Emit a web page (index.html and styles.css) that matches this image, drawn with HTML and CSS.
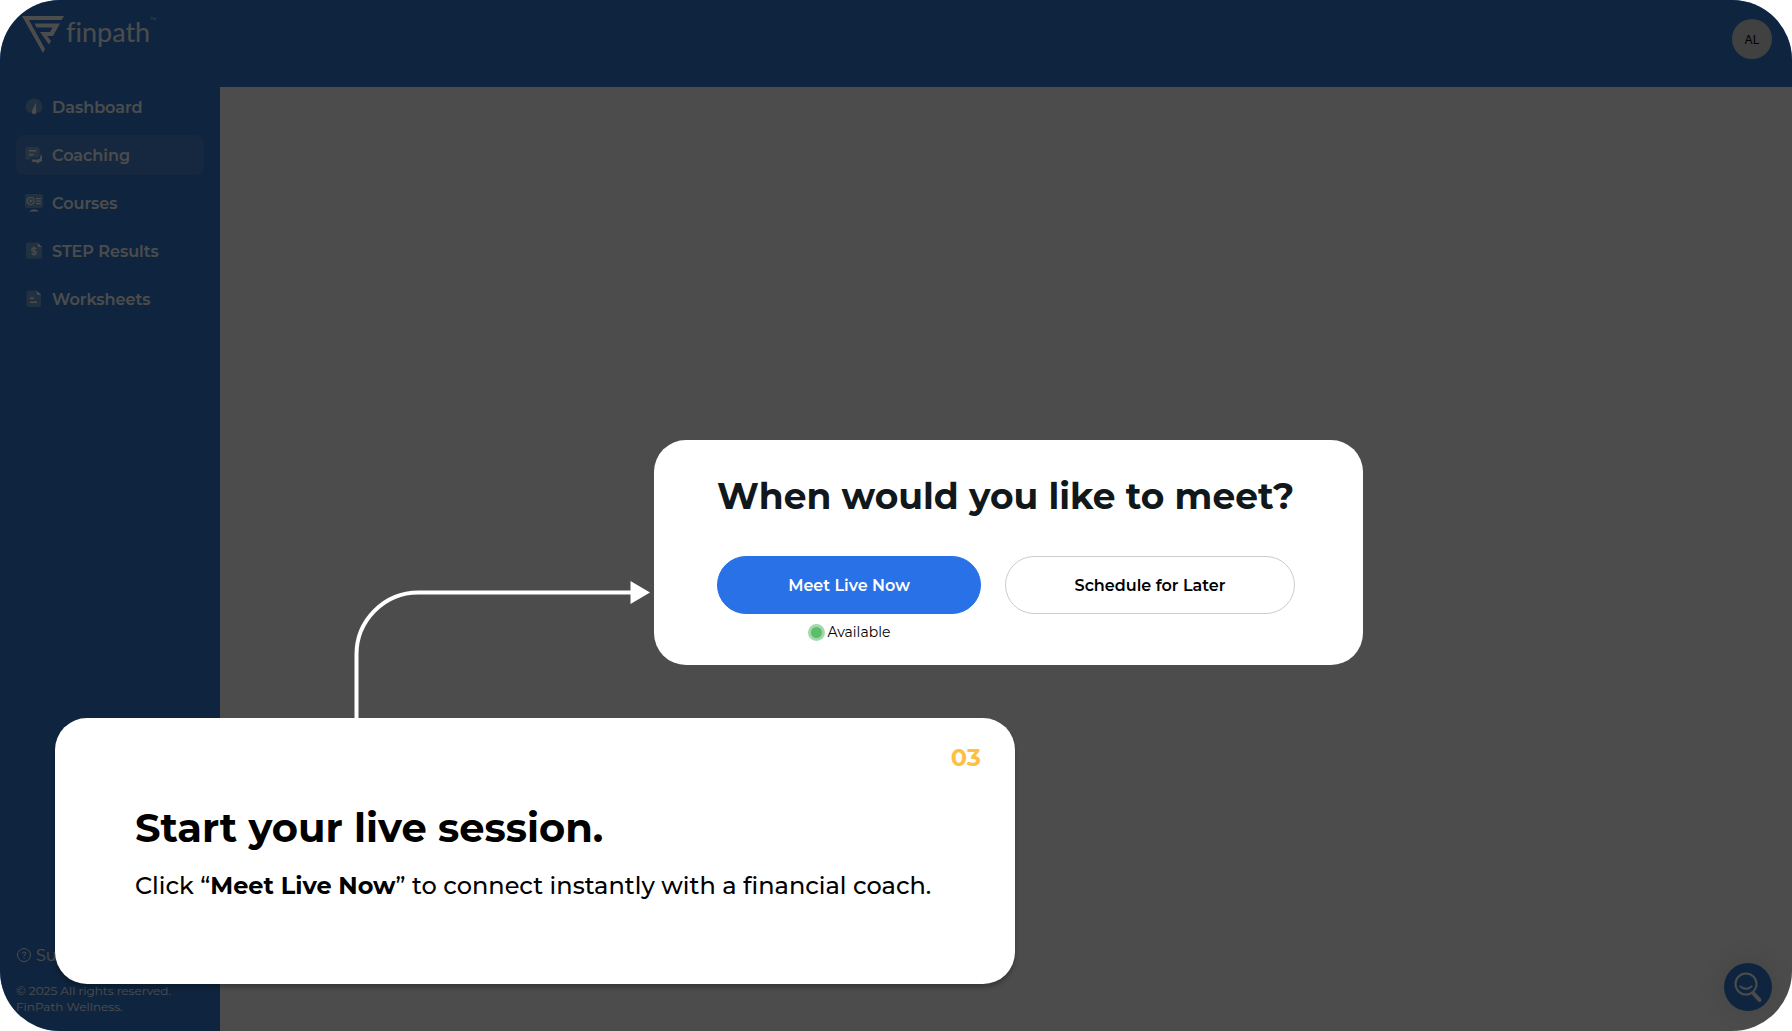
FILE: index.html
```html
<!DOCTYPE html>
<html lang="en">
<head>
<meta charset="utf-8">
<meta name="viewport" content="width=device-width, initial-scale=1">
<title>FinPath – Coaching</title>
<link rel="stylesheet" href="styles.css">
</head>
<body>
<div class="app">
  <header class="topbar">
    <a class="brand" href="#" aria-label="finpath">
      <svg class="brand-mark" viewBox="0 0 42 37" aria-hidden="true">
        <path d="M0 0H42L39.5 4H7L23 33L21 37Z"/>
        <path d="M12.500 7.500H38L31 20H25L29 25L27 28.500L18 16H28L30.500 11.500H14.500Z"/>
      </svg>
      <span class="brand-name">finpath</span><span class="brand-tm">™</span>
    </a>
    <button class="avatar" type="button">AL</button>
  </header>

  <aside class="sidebar">
    <nav class="nav">
      <a class="nav-item" href="#">
        <svg class="nav-icon" viewBox="0 0 20 20" aria-hidden="true"><path class="soft" d="M4 15.500A8.300 8.300 0 1 1 16 15.500Z"/><path d="M11.800 5.500L12.300 14.500A2.300 2.300 0 1 1 8 14Z"/></svg>
        <span>Dashboard</span>
      </a>
      <a class="nav-item nav-item-active" href="#" aria-current="page">
        <svg class="nav-icon" viewBox="0 0 20 20" aria-hidden="true"><path class="soft" d="M4 2H13Q15.500 2 15.500 4.500V10Q15.500 12.500 13 12.500H7L4 15H3.500Q1.500 15 1.500 12.500V4.500Q1.500 2 4 2Z"/><path d="M5 5H12V6.500H5ZM5 9H9.500V10.500H5ZM16.500 9.500Q18 10 18 11.500V15Q18 17 15.500 17L14 18.500L12 17H10Q7.500 17 7.500 14.500H13.500Q16.500 14 16.500 11Z"/></svg>
        <span>Coaching</span>
      </a>
      <a class="nav-item" href="#">
        <svg class="nav-icon" viewBox="0 0 20 20" aria-hidden="true"><rect class="soft" x="1" y="1" width="18" height="14" rx="2"/><circle class="line" cx="6.700" cy="8" r="3.500"/><path d="M5.700 6L9 8L5.700 10ZM12 5H17V6.200H12ZM12 7.500H17V8.700H12ZM12 10H17V11.200H12ZM8 16.500H12L15 18.500H5Z"/></svg>
        <span>Courses</span>
      </a>
      <a class="nav-item" href="#">
        <svg class="nav-icon" viewBox="0 0 20 20" aria-hidden="true"><path class="soft" d="M4 1.500H13V6H18V18L16 17L14 18.500L12 17L10 18.500L8 17L6 18.500L4 17L2 18V3.500Q2 1.500 4 1.500Z"/><path d="M13.500 1.500L18 6H15Q13.500 6 13.500 4.500Z"/><path class="line" d="M12.300 8Q11.500 6.800 10 6.800Q7.800 6.800 7.800 8.400Q7.800 10 10 10Q12.300 10 12.300 11.700Q12.300 13.300 10 13.300Q8.300 13.300 7.600 12M10 5.500V14.700"/></svg>
        <span>STEP Results</span>
      </a>
      <a class="nav-item" href="#">
        <svg class="nav-icon" viewBox="0 0 20 20" aria-hidden="true"><path class="soft" d="M5 1.500H12V6H17V16Q17 18 15 18H5Q2.500 18 2.500 16V4Q2.500 1.500 5 1.500Z"/><path d="M12.500 1.500L17.300 6H14Q12.500 6 12.500 4.500ZM6 8.500H10V10H6ZM6 12.500H13V14H6Z"/></svg>
        <span>Worksheets</span>
      </a>
    </nav>
    <footer class="side-footer">
      <a class="support" href="#">
        <svg class="support-icon" viewBox="0 0 16 16" aria-hidden="true"><circle cx="8" cy="8" r="6.500"/><path d="M6.200 6.500Q6.500 5 8 5Q9.800 5 9.800 6.500Q9.800 7.500 8 8.300V9M8 10.300V11.500"/></svg>
        <span>Support</span>
      </a>
      <p class="legal">© 2025 All rights reserved.<br>FinPath Wellness.</p>
    </footer>
  </aside>

  <main class="content"></main>

  <button class="finder" type="button" aria-label="Search help">
    <svg class="finder-icon" viewBox="0 0 32 32" aria-hidden="true"><circle cx="14" cy="13" r="10.500"/><path d="M8.500 15.500Q14 20 19.500 15.500"/><path class="handle" d="M22 23L27.500 29"/></svg>
  </button>

  <div class="scrim"></div>

  <section class="dialog" role="dialog" aria-labelledby="meet-title">
    <h1 class="dialog-title" id="meet-title">When would you like to meet?</h1>
    <div class="choices">
      <div class="choice">
        <button class="pill pill-primary" type="button">Meet Live Now</button>
        <p class="status"><span class="status-dot"></span>Available</p>
      </div>
      <div class="choice choice-wide">
        <button class="pill" type="button">Schedule for Later</button>
      </div>
    </div>
  </section>

  <svg class="connector" viewBox="0 0 298 140" aria-hidden="true">
    <path class="connector-line" d="M4.500 140V76A62 62 0 0 1 66.500 13.500H280"/>
    <path class="connector-head" d="M278.500 2L298 13.500L278.500 25Z"/>
  </svg>

  <section class="tour" aria-labelledby="tour-title">
    <span class="tour-step">03</span>
    <h2 class="tour-title" id="tour-title">Start your live session.</h2>
    <p class="tour-text">Click “<strong>Meet Live Now</strong>” to connect instantly with a financial coach.</p>
  </section>
</div>
</body>
</html>
```
FILE: styles.css
```css
* {
  box-sizing: border-box;
}

body {
  margin: 0;
  background: #fff;
  color: #000;
  font-family: Montserrat, Inter, sans-serif;
  font-variant-ligatures: none;
}

h1, h2, p {
  margin: 0;
}

a {
  color: inherit;
  text-decoration: none;
}

button {
  padding: 0;
  border: 0;
  font: inherit;
}

.app {
  position: relative;
  display: grid;
  grid-template-columns: 220px 1fr;
  grid-template-rows: 87px 1fr;
  min-height: 100vh;
  border-radius: 60px;
  overflow: hidden;
}

/* Top bar */
.topbar {
  grid-column: 1 / -1;
  display: flex;
  align-items: flex-start;
  justify-content: space-between;
  padding: 16px 20px 0 22px;
  background: #327bcf;
}

.brand {
  display: flex;
  align-items: flex-start;
  color: #fff;
}

.brand-mark {
  width: 42px;
  height: 37px;
  margin-right: 2px;
  fill: currentColor;
}

.brand-name {
  font-family: Lato, sans-serif;
  font-size: 27px;
  line-height: 32px;
}

.brand-tm {
  font-size: 6px;
  line-height: 8px;
}

.avatar {
  width: 40px;
  height: 40px;
  margin-top: 3px;
  border-radius: 50%;
  background: #d9d9d9;
  color: #000;
  font-family: Inter, sans-serif;
  font-size: 12px;
}

/* Sidebar */
.sidebar {
  display: flex;
  flex-direction: column;
  justify-content: space-between;
  padding: 0 16px 16px;
  background: #327bcf;
  color: #fff;
}

.nav {
  display: flex;
  flex-direction: column;
  gap: 8px;
}

.nav-item {
  display: flex;
  align-items: center;
  gap: 8px;
  height: 40px;
  padding: 0 8px;
  border-radius: 8px;
  font-size: 16px;
  font-weight: 600;
}

.nav-item-active {
  background: rgba(255, 255, 255, 0.1);
}

.nav-icon {
  width: 20px;
  height: 20px;
  fill: currentColor;
}

.nav-icon .soft {
  opacity: 0.3;
}

.nav-icon .line {
  fill: none;
  stroke: currentColor;
  stroke-width: 1.2;
}

.support {
  display: flex;
  align-items: center;
  gap: 4px;
  height: 24px;
  margin-bottom: 16px;
  font-size: 16px;
}

.support-icon {
  width: 16px;
  height: 16px;
  fill: none;
  stroke: currentColor;
}

.legal {
  font-size: 12px;
  line-height: 16px;
  white-space: nowrap;
}

.content {
  background: #fff;
}

.finder {
  position: absolute;
  right: 20px;
  bottom: 20px;
  display: grid;
  place-items: center;
  width: 48px;
  height: 48px;
  border-radius: 50%;
  background: #327bcf;
  box-shadow: 0 0 40px rgba(0, 0, 0, 0.15);
}

.finder-icon {
  width: 32px;
  height: 32px;
  fill: none;
  stroke: #fff;
  stroke-width: 2;
  stroke-linecap: round;
}

.finder-icon .handle {
  stroke-width: 4;
}

/* Walkthrough overlay */
.scrim {
  position: absolute;
  inset: 0;
  background: rgba(0, 0, 0, 0.7);
}

.dialog {
  position: absolute;
  top: 440px;
  left: 654px;
  width: 709px;
  padding: 32px 68px 23px 63px;
  border-radius: 32px;
  background: #fff;
}

.dialog-title {
  color: #11181c;
  font-size: 36px;
  font-weight: 700;
  line-height: 48px;
  white-space: nowrap;
}

.choices {
  display: flex;
  gap: 24px;
  margin-top: 36px;
}

.choice {
  flex: 264 1 0;
}

.choice-wide {
  flex-grow: 290;
}

.pill {
  width: 100%;
  height: 58px;
  border: 1px solid #ccc;
  border-radius: 29px;
  background: #fff;
  color: #000;
  font-size: 16px;
  font-weight: 600;
}

.pill-primary {
  border-color: #2871e6;
  background: #2871e6;
  color: #fff;
}

.status {
  display: flex;
  align-items: center;
  justify-content: center;
  gap: 3px;
  margin-top: 8px;
  font-size: 14px;
  line-height: 20px;
}

.status-dot {
  width: 17px;
  height: 17px;
  border: 3px solid #a3d9aa;
  border-radius: 50%;
  background: #5bbf69;
}

.connector {
  position: absolute;
  top: 579px;
  left: 352px;
  width: 298px;
  height: 140px;
}

.connector-line {
  fill: none;
  stroke: #fff;
  stroke-width: 4;
}

.connector-head {
  fill: #fff;
}

.tour {
  position: absolute;
  top: 718px;
  left: 55px;
  display: flex;
  flex-direction: column;
  width: 960px;
  padding: 24px 34px 82px 80px;
  border-radius: 32px;
  background: #fff;
  box-shadow: 0 4px 4px rgba(0, 0, 0, 0.25);
}

.tour-step {
  align-self: flex-end;
  color: #ffbf43;
  font-size: 24px;
  font-weight: 700;
  line-height: 32px;
}

.tour-title {
  margin-top: 26px;
  font-size: 40px;
  font-weight: 700;
  line-height: 56px;
}

.tour-text {
  margin-top: 14px;
  font-size: 24px;
  font-weight: 500;
  line-height: 32px;
  white-space: nowrap;
}
```
